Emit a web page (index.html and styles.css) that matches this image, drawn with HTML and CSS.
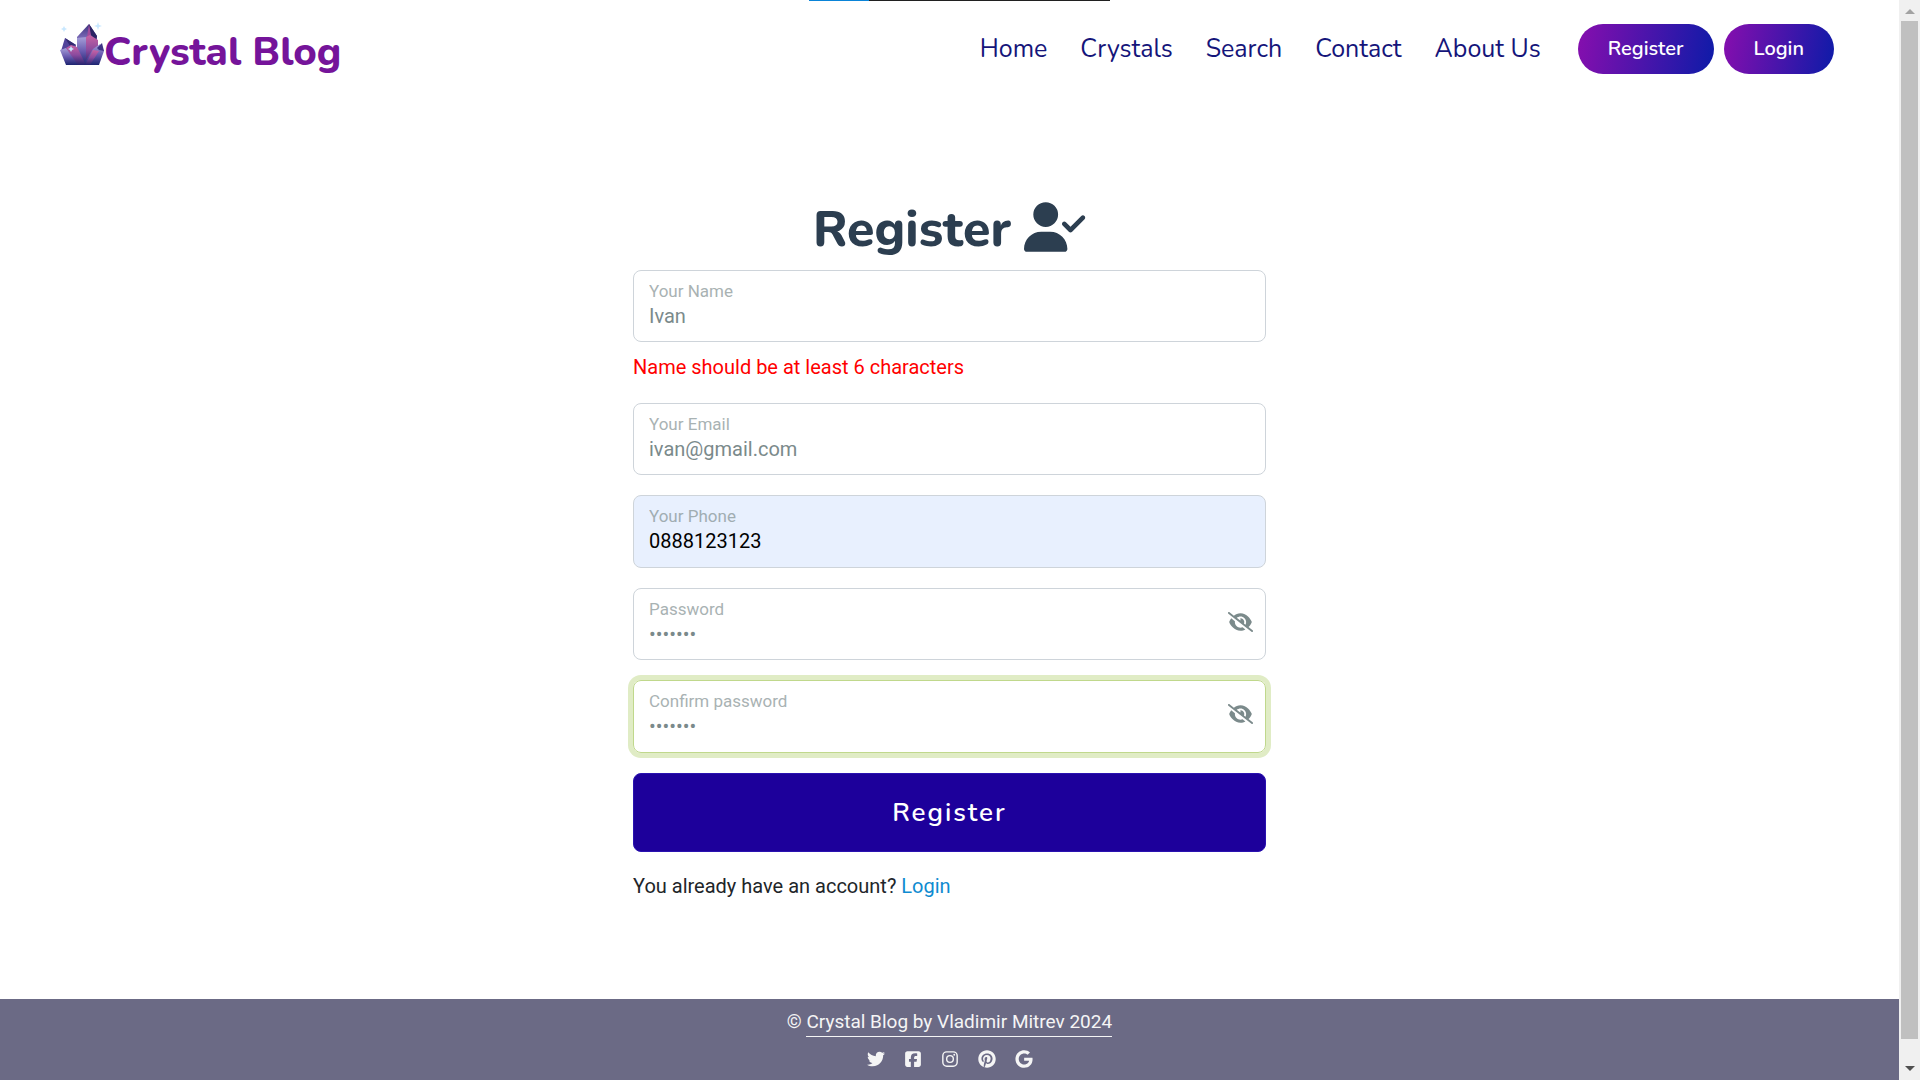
FILE: index.html
```html
<!DOCTYPE html>
<html lang="en">
<head>
<meta charset="utf-8">
<meta name="viewport" content="width=device-width, initial-scale=1">
<title>Crystal Blog - Register</title>
<link rel="stylesheet" href="styles.css">
</head>
<body>
<div class="share-bar"></div>
<div class="page">
  <header class="header">
    <a class="brand" href="#">
      <svg class="brand-icon" viewBox="0 0 44 44" aria-hidden="true">
        <defs>
          <linearGradient id="g1" x1="0" y1="0" x2="0" y2="1"><stop offset="0" stop-color="#a6a0d8"/><stop offset=".5" stop-color="#6a5bb0"/><stop offset="1" stop-color="#1d2470"/></linearGradient>
          <linearGradient id="g2" x1="0" y1="0" x2="0" y2="1"><stop offset="0" stop-color="#c963a4"/><stop offset=".5" stop-color="#8a4a9e"/><stop offset="1" stop-color="#24246f"/></linearGradient>
          <linearGradient id="g3" x1="0" y1="0" x2="0" y2="1"><stop offset="0" stop-color="#3b2f7c"/><stop offset="1" stop-color="#8c7cc8"/></linearGradient>
        </defs>
        <path fill="url(#g3)" d="M17 15 29 2l8 12v6H17z"/>
        <path fill="#2b2464" d="M29 2l8 12-1 5-6-7z"/>
        <path fill="#a04d9c" d="M29 2l2 11-4 2z"/>
        <path fill="url(#g1)" d="M17 16l10-1v28H17z"/>
        <path fill="url(#g2)" d="M26 15l4-2 8 5v15l-12 10z"/>
        <path fill="url(#g1)" d="M33 27l7-5 4 7-5 14H23z"/>
        <path fill="url(#g2)" d="M33 28l6 1-9 14h-5z"/>
        <path fill="#3f3485" d="M42 21l2 8-5-1-2-2z"/>
        <path fill="#51439a" d="M5 16l11 7-1 6H1z"/>
        <path fill="#332a70" d="M5 16l11 7-6 1z"/>
        <path fill="url(#g1)" d="M0 28l6-2 17 17H6z"/>
        <path fill="url(#g2)" d="M6 26l5-3 6 2 9 18h-8z"/>
        <path fill="#c8e8ff" d="M11 24l1 2 2 1-2 1-1 2-1-2-2-1 2-1zM4 4l1 2 2 1-2 1-1 2-1-2-2-1 2-1zM38 0l1 3 3 1-3 1-1 3-1-3-3-1 3-1z"/>
      </svg>
      <span>Crystal Blog</span>
    </a>
    <nav class="nav">
      <a href="#">Home</a>
      <a href="#">Crystals</a>
      <a href="#">Search</a>
      <a href="#">Contact</a>
      <a href="#">About Us</a>
    </nav>
    <div class="actions">
      <a class="pill" href="#">Register</a>
      <a class="pill" href="#">Login</a>
    </div>
  </header>

  <main class="main">
    <form class="form">
      <h1 class="title">
        <span>Register</span>
        <svg class="title-icon" viewBox="0 0 640 512" aria-hidden="true"><path d="M96 128a128 128 0 1 1 256 0A128 128 0 1 1 96 128zM0 482.300C0 383.800 79.800 304 178.300 304h91.400C368.200 304 448 383.800 448 482.300c0 16.400-13.300 29.700-29.700 29.700H29.700C13.300 512 0 498.700 0 482.300zM625 177L497 305c-9.400 9.400-24.600 9.400-33.900 0l-64-64c-9.400-9.400-9.400-24.600 0-33.900s24.600-9.400 33.900 0l47 47L591 143c9.400-9.400 24.600-9.400 33.900 0s9.400 24.600 0 33.900z"/></svg>
      </h1>
      <div class="field">
        <label for="name">Your Name</label>
        <input id="name" type="text" value="Ivan">
      </div>
      <p class="error">Name should be at least 6 characters</p>
      <div class="field">
        <label for="email">Your Email</label>
        <input id="email" type="email" value="ivan@gmail.com">
      </div>
      <div class="field filled">
        <label for="phone">Your Phone</label>
        <input id="phone" type="tel" value="0888123123">
      </div>
      <div class="field">
        <label for="password">Password</label>
        <input id="password" type="password" value="crystal">
        <button class="reveal" type="button" aria-label="Show password"><svg viewBox="0 0 640 512"><path d="M38.800 5.100C28.400-3.100 13.300-1.200 5.100 9.200S-1.200 34.700 9.200 42.900l592 464c10.400 8.200 25.500 6.300 33.700-4.100s6.300-25.500-4.100-33.700L525.600 386.700c39.600-40.600 66.400-86.100 79.900-118.400c3.300-7.900 3.300-16.700 0-24.600c-14.900-35.700-46.200-87.700-93-131.100C465.500 68.800 400.800 32 320 32c-68.200 0-125 26.300-169.300 60.800L38.800 5.100zM223.100 149.500C248.600 126.200 282.700 112 320 112c79.500 0 144 64.500 144 144c0 24.900-6.300 48.300-17.400 68.700L408 294.500c8.400-19.300 10.600-41.400 4.800-63.300c-11.100-41.500-47.800-69.400-88.600-71.100c-5.800-.2-9.200 6.100-7.400 11.700c2.100 6.400 3.300 13.200 3.300 20.300c0 10.200-2.400 19.800-6.600 28.300l-90.300-70.800zM373 389.900c-16.400 6.500-34.300 10.100-53 10.100c-79.500 0-144-64.500-144-144c0-6.900 .5-13.600 1.400-20.200L83.100 161.500C60.300 191.200 44 220.800 34.500 243.700c-3.300 7.900-3.300 16.700 0 24.600c14.900 35.700 46.200 87.700 93 131.100C174.500 443.200 239.200 480 320 480c47.800 0 89.900-12.900 126.200-32.500L373 389.900z"/></svg></button>
      </div>
      <div class="field active">
        <label for="confirm">Confirm password</label>
        <input id="confirm" type="password" value="crystal">
        <button class="reveal" type="button" aria-label="Show password"><svg viewBox="0 0 640 512"><path d="M38.800 5.100C28.400-3.100 13.300-1.200 5.100 9.200S-1.200 34.700 9.200 42.900l592 464c10.400 8.200 25.500 6.300 33.700-4.100s6.300-25.500-4.100-33.700L525.600 386.700c39.600-40.600 66.400-86.100 79.900-118.400c3.300-7.900 3.300-16.700 0-24.600c-14.900-35.700-46.200-87.700-93-131.100C465.500 68.800 400.800 32 320 32c-68.200 0-125 26.300-169.300 60.800L38.800 5.100zM223.100 149.500C248.600 126.200 282.700 112 320 112c79.500 0 144 64.500 144 144c0 24.900-6.300 48.300-17.400 68.700L408 294.500c8.400-19.300 10.600-41.400 4.800-63.300c-11.100-41.500-47.800-69.400-88.600-71.100c-5.800-.2-9.200 6.100-7.400 11.700c2.100 6.400 3.300 13.200 3.300 20.300c0 10.200-2.400 19.800-6.600 28.300l-90.300-70.800zM373 389.900c-16.400 6.500-34.300 10.100-53 10.100c-79.500 0-144-64.500-144-144c0-6.900 .5-13.600 1.400-20.200L83.100 161.500C60.300 191.200 44 220.800 34.500 243.700c-3.300 7.900-3.300 16.700 0 24.600c14.900 35.700 46.200 87.700 93 131.100C174.500 443.200 239.200 480 320 480c47.800 0 89.900-12.900 126.200-32.500L373 389.900z"/></svg></button>
      </div>
      <button class="submit" type="submit">Register</button>
      <p class="already">You already have an account? <a href="#">Login</a></p>
    </form>
  </main>

  <footer class="footer">
    <p class="copyright">© <a href="#">Crystal Blog by Vladimir Mitrev 2024</a></p>
    <div class="social">
      <a href="#" aria-label="Twitter"><svg viewBox="0 0 512 512"><path d="M459.370 151.716c.325 4.548.325 9.097.325 13.645 0 138.720-105.583 298.558-298.558 298.558-59.452 0-114.680-17.219-161.137-47.106 8.447.974 16.568 1.299 25.340 1.299 49.055 0 94.213-16.568 130.274-44.832-46.132-.975-84.792-31.188-98.112-72.772 6.498.974 12.995 1.624 19.818 1.624 9.421 0 18.843-1.300 27.614-3.573-48.081-9.747-84.143-51.980-84.143-102.985v-1.299c13.969 7.797 30.214 12.670 47.431 13.319-28.264-18.843-46.781-51.005-46.781-87.391 0-19.492 5.197-37.360 14.294-52.954 51.655 63.675 129.300 105.258 216.365 109.807-1.624-7.797-2.599-15.918-2.599-24.040 0-57.828 46.782-104.934 104.934-104.934 30.213 0 57.502 12.670 76.670 33.137 23.715-4.548 46.456-13.320 66.599-25.340-7.798 24.366-24.366 44.833-46.132 57.827 21.117-2.273 41.584-8.122 60.426-16.243-14.292 20.791-32.161 39.308-52.628 54.253z"/></svg></a>
      <a href="#" aria-label="Facebook"><svg viewBox="0 0 448 512"><path d="M64 32C28.700 32 0 60.700 0 96v320c0 35.300 28.700 64 64 64h98.200V334.200h-52.800V256h52.800v-33.700c0-87.100 39.400-127.500 125-127.500 16.200 0 44.200 3.200 55.700 6.400V172c-6-.6-16.500-1-29.600-1-42 0-58.200 15.900-58.200 57.200V256h83.600l-14.400 78.200h-69.300V480H384c35.300 0 64-28.700 64-64V96c0-35.300-28.700-64-64-64z"/></svg></a>
      <a href="#" aria-label="Instagram"><svg viewBox="0 0 448 512"><path fill-rule="evenodd" d="M132 32h184a132 132 0 0 1 132 132v184a132 132 0 0 1-132 132H132A132 132 0 0 1 0 348V164A132 132 0 0 1 132 32zm4 40a94 94 0 0 0-96 96v176a94 94 0 0 0 96 96h176a94 94 0 0 0 96-96V168a94 94 0 0 0-96-96zM224 141a115 115 0 1 1 0 230 115 115 0 0 1 0-230zm0 40a75 75 0 1 0 0 150 75 75 0 0 0 0-150zm120-72a27 27 0 1 1 0 54 27 27 0 0 1 0-54z"/></svg></a>
      <a href="#" aria-label="Pinterest"><svg viewBox="0 0 496 512"><path d="M496 256c0 137-111 248-248 248-25.600 0-50.200-3.900-73.400-11.100 10.100-16.500 25.200-43.500 30.800-65 3-11.600 15.400-59 15.400-59 8.100 15.400 31.700 28.500 56.800 28.500 74.800 0 128.700-68.800 128.700-154.300 0-81.900-66.900-143.200-152.900-143.200-107 0-163.900 71.800-163.900 150.100 0 36.400 19.400 81.700 50.300 96.100 4.700 2.200 7.200 1.200 8.300-3.300.8-3.400 5-20.300 6.900-28.100.6-2.500.3-4.700-1.700-7.100-10.100-12.500-18.300-35.300-18.300-56.600 0-54.700 41.400-107.600 112-107.600 60.900 0 103.600 41.500 103.600 100.900 0 67.100-33.900 113.600-78 113.600-24.300 0-42.600-20.100-36.700-44.800 7-29.500 20.500-61.300 20.500-82.600 0-19-10.200-34.900-31.400-34.900-24.900 0-44.900 25.700-44.900 60.200 0 22 7.400 36.800 7.400 36.800s-24.500 103.800-29 123.200c-5 21.400-3 51.600-.9 71.200C65.400 450.900 0 361.100 0 256 0 119 111 8 248 8s248 111 248 248z"/></svg></a>
      <a href="#" aria-label="Google"><svg viewBox="0 0 488 512"><path d="M488 261.800C488 403.300 391.100 504 248 504 110.800 504 0 393.200 0 256S110.800 8 248 8c66.800 0 123 24.500 166.300 64.900l-67.500 64.900C258.500 52.600 94.300 116.600 94.300 256c0 86.500 69.100 156.600 153.700 156.600 98.200 0 135-70.400 140.800-106.900H248v-85.300h236.100c2.300 12.700 3.900 24.900 3.900 41.400z"/></svg></a>
    </div>
  </footer>
</div>
<div class="scrollbar" aria-hidden="true">
  <span class="arrow up"></span>
  <span class="thumb"></span>
  <span class="arrow down"></span>
</div>
</body>
</html>
```
FILE: styles.css
```css
* { box-sizing: border-box; }

body {
  margin: 0;
  display: grid;
  grid-template-columns: 1fr 21px;
  min-height: 100vh;
  font-family: Roboto, sans-serif;
  font-size: 20px;
  line-height: 30px;
  color: #212529;
  background: #fff;
}

a { text-decoration: none; }
svg { display: block; fill: currentColor; }
p, h1 { margin: 0; }

.share-bar {
  position: absolute;
  top: 0;
  left: 50%;
  width: 301px;
  height: 1px;
  margin-left: -151px;
  background: linear-gradient(90deg, #0a84d8 60px, #202020 60px);
}

.page { display: flex; flex-direction: column; }

.header {
  display: flex;
  align-items: center;
  height: 98px;
  padding: 0 65px 0 60px;
}

.brand {
  display: flex;
  align-items: flex-start;
  margin-right: auto;
  padding-top: 5px;
  font-family: Nunito, "Open Sans", sans-serif;
  font-size: 40px;
  font-weight: 800;
  line-height: 60px;
  color: #75149a;
}
.brand-icon { width: 44px; height: 44px; }

.nav {
  display: flex;
  gap: 33px;
  margin-right: 37px;
  font-family: Nunito, "Open Sans", sans-serif;
  font-size: 25px;
}
.nav a { color: #15157a; }

.actions { display: flex; gap: 10px; }
.pill {
  padding: 10px 30px;
  border-radius: 25px;
  background: linear-gradient(100deg, #870eae, #0d1ba8);
  color: #fff;
  font-family: Nunito, "Open Sans", sans-serif;
  font-size: 20px;
  font-weight: 600;
}

.main { flex: 1; padding: 98px 0 80px; }

.form {
  display: flex;
  flex-direction: column;
  gap: 20px;
  width: 33.3333%;
  margin: 0 auto;
}

.title {
  display: flex;
  justify-content: center;
  gap: 13px;
  height: 54px;
  padding-top: 6px;
  font-family: Nunito, "Open Sans", sans-serif;
  font-size: 50px;
  font-weight: 800;
  line-height: 56px;
  color: #2c3e50;
}
.title-icon { width: 62px; height: 50px; }

.field {
  display: grid;
  grid-template-columns: 1fr auto;
  grid-template-rows: 24px 25px;
  height: 72px;
  padding: 8px 12px 0 15px;
  border: 1px solid #ced4da;
  border-radius: 8px;
  color: #7b8a8b;
}
.field label { font-size: 17px; line-height: 24px; opacity: .65; }
.field input {
  grid-row: 2;
  min-width: 0;
  padding: 0;
  border: 0;
  outline: 0;
  background: none;
  font: inherit;
  color: inherit;
}
.filled { background: #e8f0fe; }
.filled input { color: #000; }
.active { border-color: #c0d88c; box-shadow: 0 0 0 5px #e0ecc5; }

.reveal {
  grid-column: 2;
  grid-row: 1 / 3;
  align-self: center;
  padding: 0;
  border: 0;
  background: none;
  color: #7b8a8b;
}
.reveal svg { width: 25px; height: 20px; }

.error { margin: -10px 0 1px; color: #f00; }

.filled, .active { height: 73px; }

.submit {
  height: 79px;
  border: 1px solid #2a12b0;
  border-radius: 8px;
  background: #1d009b;
  color: #fff;
  font-family: Nunito, "Open Sans", sans-serif;
  font-size: 26px;
  font-weight: 600;
  letter-spacing: 2px;
}

.already { margin-top: -1px; }
.already a { color: #0f8bd0; }

.footer {
  display: flex;
  flex-direction: column;
  align-items: center;
  gap: 12px;
  height: 81px;
  padding-top: 9px;
  background: #6b6a85;
  color: #f5f5f5;
  font-size: 19px;
}
.footer a { color: inherit; }
.copyright { height: 30px; line-height: 28px; }
.copyright a { display: inline-block; border-bottom: 1px solid #f5f5f5; }

.social { display: flex; gap: 19px; }
.social svg { width: 18px; height: 18px; }

.scrollbar {
  position: sticky;
  top: 0;
  display: flex;
  flex-direction: column;
  align-items: center;
  gap: 7px;
  height: 100vh;
  padding: 9px 0;
  background: #f0f0f0;
}
.thumb { width: 17px; flex: 1; margin-bottom: 20px; background: #c0c0c0; }
.arrow { border: 5px solid transparent; }
.up { border-top: 0; border-bottom-color: #a3a3a3; }
.down { border-bottom: 0; border-top-color: #505050; }
```
